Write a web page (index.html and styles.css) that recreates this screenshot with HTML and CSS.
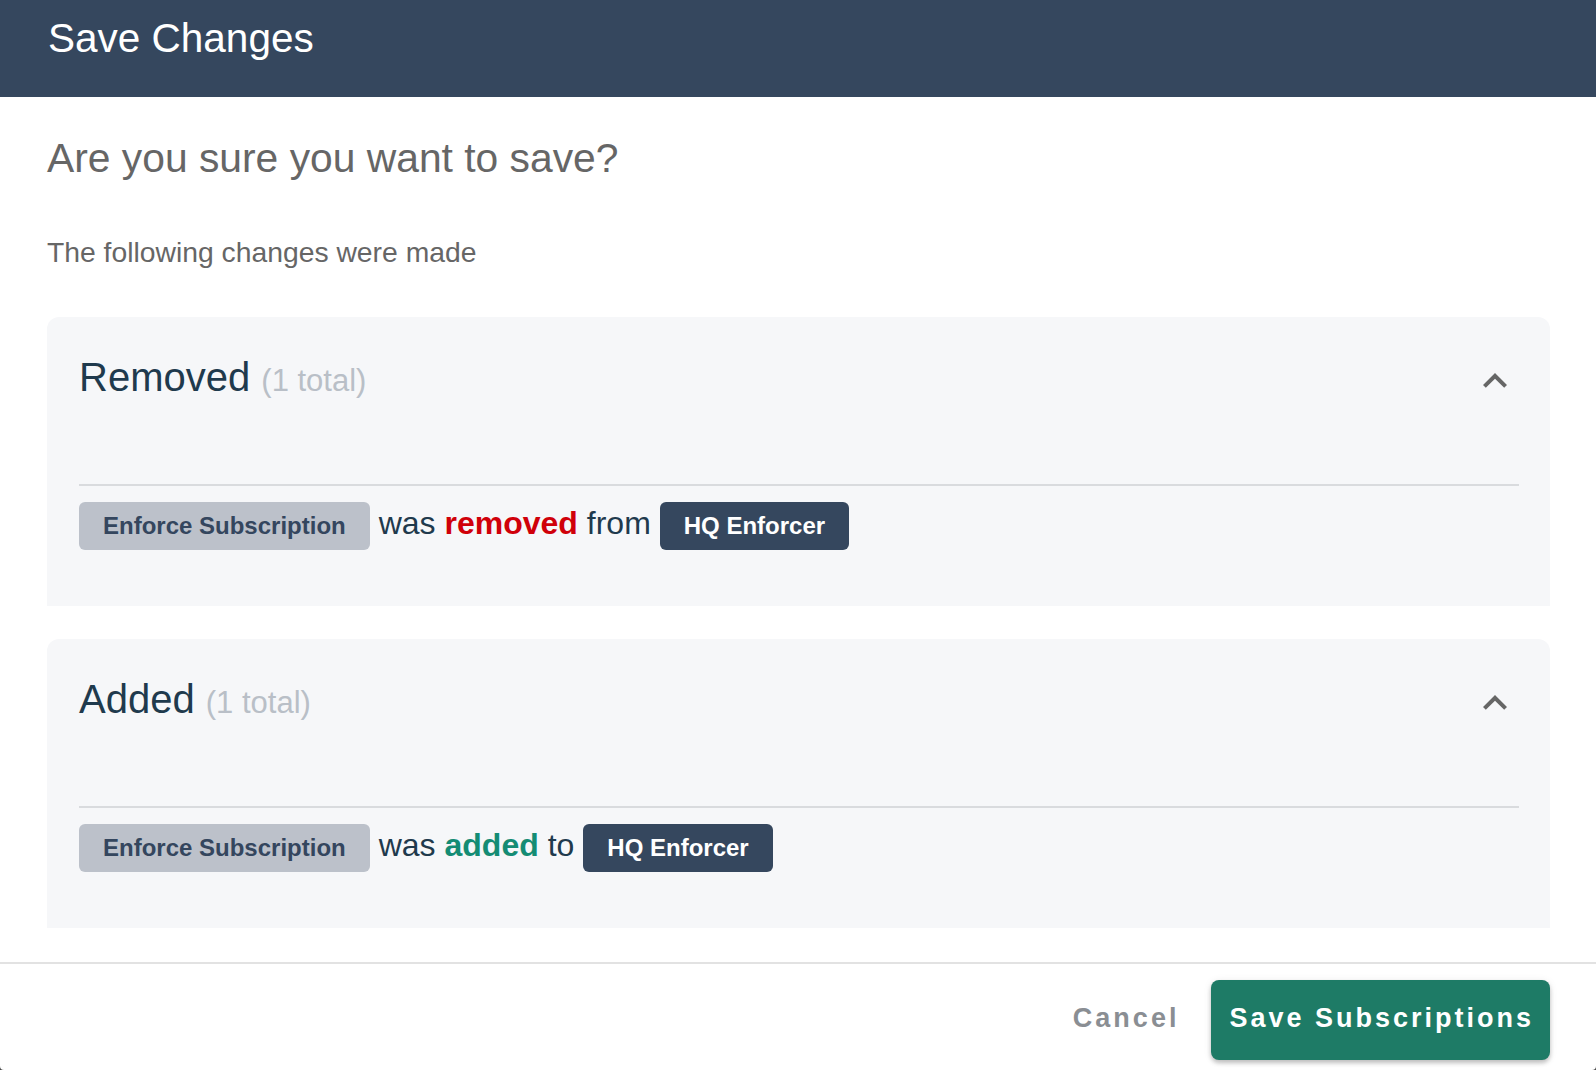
FILE: index.html
```html
<!DOCTYPE html>
<html lang="en">
<head>
<meta charset="utf-8">
<title>Save Changes</title>
<link rel="stylesheet" href="styles.css">
</head>
<body>
<div class="dialog">
  <header class="dialog-header">
    <h1 class="dialog-title">Save Changes</h1>
  </header>
  <main class="dialog-body">
    <h2 class="confirm-title">Are you sure you want to save?</h2>
    <p class="confirm-text">The following changes were made</p>

    <section class="change-panel">
      <div class="panel-head">
        <h3 class="panel-title">Removed <span class="panel-count">(1 total)</span></h3>
        <button class="toggle" type="button" aria-label="Collapse">
          <svg viewBox="0 0 24 24" width="48" height="48"><path d="M12 8l-6 6 1.41 1.41L12 10.83l4.59 4.58L18 14z"/></svg>
        </button>
      </div>
      <div class="panel-content">
        <span class="chip chip-light">Enforce Subscription</span>
        <span class="change-text">was <strong class="removed">removed</strong> from</span>
        <span class="chip chip-dark">HQ Enforcer</span>
      </div>
    </section>

    <section class="change-panel">
      <div class="panel-head">
        <h3 class="panel-title">Added <span class="panel-count">(1 total)</span></h3>
        <button class="toggle" type="button" aria-label="Collapse">
          <svg viewBox="0 0 24 24" width="48" height="48"><path d="M12 8l-6 6 1.41 1.41L12 10.83l4.59 4.58L18 14z"/></svg>
        </button>
      </div>
      <div class="panel-content">
        <span class="chip chip-light">Enforce Subscription</span>
        <span class="change-text">was <strong class="added">added</strong> to</span>
        <span class="chip chip-dark">HQ Enforcer</span>
      </div>
    </section>
  </main>
  <footer class="dialog-footer">
    <button class="btn btn-cancel" type="button">Cancel</button>
    <button class="btn btn-save" type="button">Save Subscriptions</button>
  </footer>
</div>
</body>
</html>
```

FILE: styles.css
```css
* {
  box-sizing: border-box;
}

html, body {
  margin: 0;
  padding: 0;
}

body {
  background: #4a4a4a;
  font-family: "Liberation Sans", Arial, Helvetica, sans-serif;
  width: 1596px;
  height: 1070px;
  overflow: hidden;
}

.dialog {
  width: 1596px;
  height: 1070px;
  background: #ffffff;
  border-radius: 0 0 4px 4px;
  display: flex;
  flex-direction: column;
  overflow: hidden;
}

.dialog-header {
  height: 97px;
  flex: 0 0 97px;
  background: #35475e;
  padding: 15px 48px 0;
}

.dialog-title {
  margin: 0;
  font-size: 40.5px;
  line-height: 46px;
  font-weight: 400;
  color: #ffffff;
}

.dialog-body {
  padding: 0 46px 34px 47px;
}

.confirm-title {
  margin: 37px 0 0;
  font-size: 40.8px;
  line-height: 48px;
  font-weight: 400;
  color: #666666;
}

.confirm-text {
  margin: 54px 0 0;
  font-size: 28.3px;
  line-height: 32px;
  color: #666666;
}

.change-panel {
  margin-top: 49px;
  background: #f6f7f9;
  border-radius: 12px 12px 0 0;
  padding: 0 31px 0 32px;
}

.change-panel + .change-panel {
  margin-top: 33px;
}

.panel-head {
  height: 169px;
  padding-top: 36px;
  border-bottom: 2px solid #d9dbde;
  display: flex;
  align-items: flex-start;
  justify-content: space-between;
}

.panel-title {
  margin: 0;
  font-size: 40px;
  line-height: 48px;
  font-weight: 400;
  color: #1f3a4d;
}

.panel-count {
  font-size: 31px;
  color: #b9bfc7;
}

.toggle {
  width: 48px;
  height: 48px;
  padding: 0;
  margin-top: 4px;
  border: 0;
  background: transparent;
  display: flex;
  align-items: center;
  justify-content: center;
}

.toggle svg {
  display: block;
  fill: #666666;
}

.panel-content {
  height: 120px;
  padding: 16px 0 0;
  display: flex;
  align-items: flex-start;
  gap: 9px;
}

.chip {
  height: 48px;
  padding: 0 24px;
  display: inline-flex;
  align-items: center;
  border-radius: 6px;
  font-size: 24px;
  font-weight: 700;
  white-space: nowrap;
}

.chip-light {
  background: #bcc1ca;
  color: #34465e;
}

.chip-dark {
  background: #35475e;
  color: #ffffff;
}

.change-text {
  height: 48px;
  font-size: 32px;
  line-height: 43px;
  color: #1f3a4d;
  white-space: nowrap;
}

.removed {
  color: #d0000a;
}

.added {
  color: #148c74;
}

.dialog-footer {
  border-top: 2px solid #e2e2e2;
  padding: 16px 46px 0 0;
  display: flex;
  justify-content: flex-end;
  align-items: flex-start;
}

.btn {
  height: 80px;
  padding: 0 16px 3px 18px;
  border: 0;
  border-radius: 8px;
  font-family: "Liberation Sans", Arial, Helvetica, sans-serif;
  font-size: 27px;
  font-weight: 700;
  letter-spacing: 3px;
  background: transparent;
  cursor: pointer;
}

.btn-cancel {
  color: #8a8e93;
  margin-right: 16px;
}

.btn-save {
  background: #1e7b66;
  color: #ffffff;
  box-shadow: 0 3px 4px rgba(0, 0, 0, 0.22), 0 1px 8px rgba(0, 0, 0, 0.08);
}
```
